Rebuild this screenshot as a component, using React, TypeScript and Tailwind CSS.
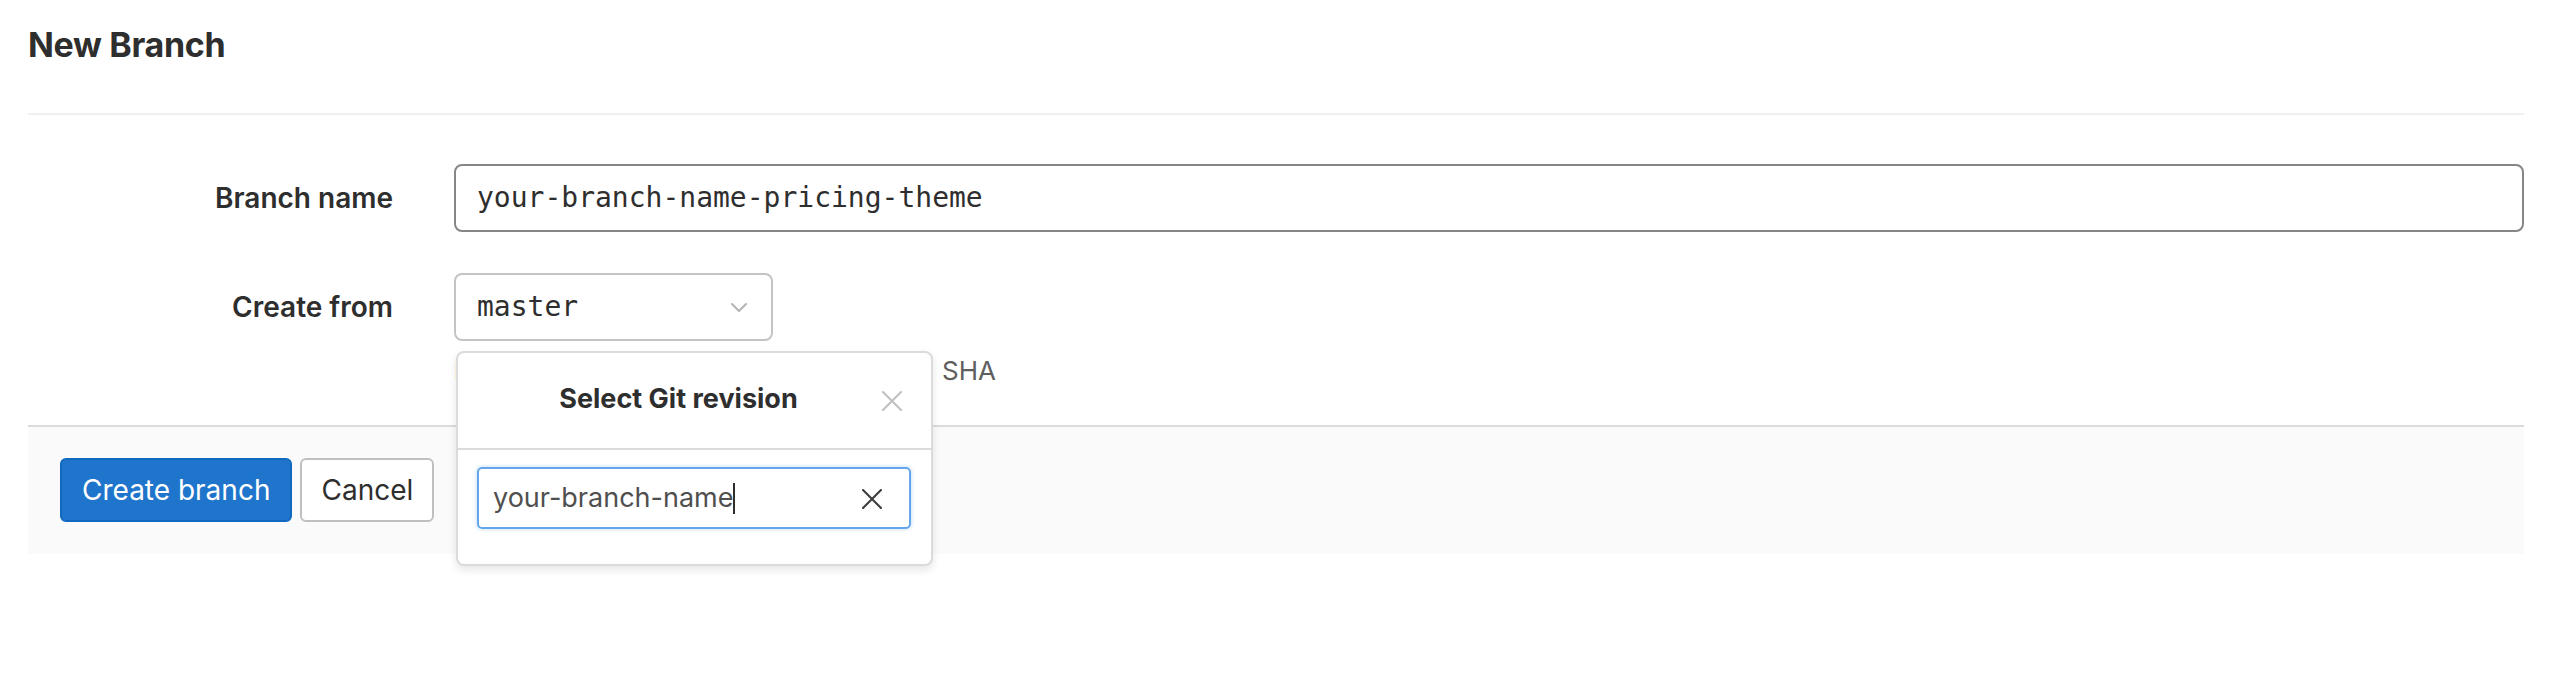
import React from "react";

function XIcon({ className, stroke, width }: { className?: string; stroke: string; width: number }) {
  return (
    <svg viewBox="0 0 20 20" className={className} fill="none">
      <path d="M1 1 L19 19 M19 1 L1 19" stroke={stroke} strokeWidth={width} strokeLinecap="round" />
    </svg>
  );
}

export default function App() {
  return (
    <div className="min-h-screen bg-white pl-[28px] pr-[52px] text-[#2e2e2e] font-['Inter','Liberation_Sans',sans-serif]">
      <div className="pt-[24px] pb-[48px] border-b-2 border-[#f0f0f0]">
        <h3 className="text-[34px] font-bold leading-[41px] tracking-[-0.01em]">New Branch</h3>
      </div>

      <div className="pt-[49px] pb-[36px]">
        <div className="flex items-center">
          <label className="w-[365px] shrink-0 text-right text-[28px] font-semibold">Branch name</label>
          <div className="ml-[61px] flex-1 h-[68px] border-2 border-[#868686] rounded-[8px] flex items-center pl-[21px] text-[28px] text-[#2e2e2e] font-['DejaVu_Sans_Mono',monospace]">
            your-branch-name-pricing-theme
          </div>
        </div>

        <div className="flex mt-[41px]">
          <label className="w-[365px] shrink-0 h-[68px] flex items-center justify-end text-[28px] font-semibold">
            Create from
          </label>
          <div className="ml-[61px] relative">
            <div className="w-[319px] h-[68px] border-2 border-[#c4c4c4] rounded-[8px] bg-white flex items-center justify-between pl-[21px] pr-[24px]">
              <span className="text-[28px] font-['DejaVu_Sans_Mono',monospace]">master</span>
              <svg viewBox="0 0 16 9" className="w-[16px] h-[9px]" fill="none">
                <path d="M1 1 L8 8 L15 1" stroke="#b5b5b5" strokeWidth="2" strokeLinecap="round" strokeLinejoin="round" />
              </svg>
            </div>
            <p className="mt-[12px] text-[26px] leading-[36px] [word-spacing:4px] text-[#5e5e5e] whitespace-nowrap">
              Existing branch name, tag, or commit SHA
            </p>

            <div className="absolute left-[2px] top-[78px] w-[477px] bg-white border-2 border-[#dbdbdb] rounded-[8px] shadow-[0_4px_8px_rgba(0,0,0,0.1)] z-10">
              <div className="relative h-[97px] border-b-2 border-[#dbdbdb] flex items-center justify-center pr-[32px]">
                <span className="text-[27px] font-bold text-[#2e2e2e] -mt-[2px]">Select Git revision</span>
                <XIcon className="absolute right-[29px] top-[38px] w-[20px] h-[20px]" stroke="#bfbfbf" width={2} />
              </div>
              <div className="pt-[17px] pl-[19px] pr-[20px] pb-[35px]">
                <div className="relative h-[62px] border-2 border-[#63a6e9] rounded-[5px] shadow-[0_0_4px_rgba(99,166,233,0.45)] flex items-center pl-[14px]">
                  <span className="text-[27px] text-[#4f4f4f]">your-branch-name</span>
                  <span className="inline-block w-[2px] h-[31px] bg-[#2e2e2e]" />
                  <XIcon className="absolute right-[27px] top-[20px] w-[20px] h-[20px]" stroke="#3a3a3a" width={2} />
                </div>
              </div>
            </div>
          </div>
        </div>
      </div>

      <div className="border-t-2 border-[#dbdbdb] bg-[#fafafa] pt-[31px] pb-[32px] pl-[32px] flex gap-[8px]">
        <button className="h-[64px] px-[20px] rounded-[6px] bg-[#1f75cb] border-2 border-[#1068bf] text-white text-[28px]">
          Create branch
        </button>
        <button className="h-[64px] px-[19px] rounded-[6px] bg-white border-2 border-[#bfbfbf] text-[#2e2e2e] text-[28px]">
          Cancel
        </button>
      </div>
    </div>
  );
}
